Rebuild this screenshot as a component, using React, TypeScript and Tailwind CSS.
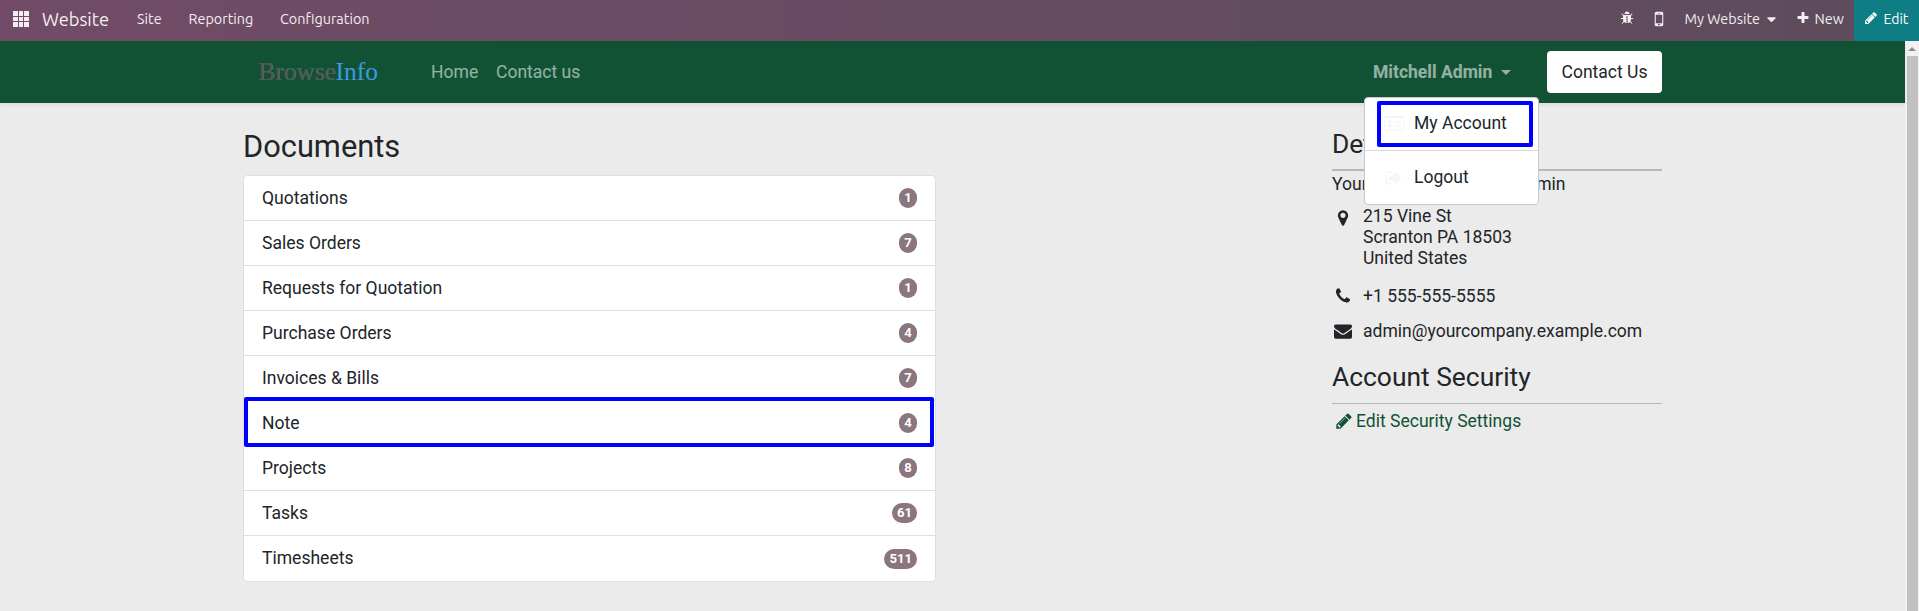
import React from "react";

const PENCIL =
  "M491 1536l91-91-235-235-91 91v107h128v128h107zm523-928q0-22-22-22-10 0-17 7l-542 542q-7 7-7 17 0 22 22 22 10 0 17-7l542-542q7-7 7-17zm-54-192l416 416-832 832h-416v-416zm683 96q0 53-37 90l-166 166-416-416 166-165q36-38 90-38 53 0 91 38l235 234q37 39 37 91z";
const PHONE =
  "M1600 1240q0 27-10 70.5t-21 68.5q-21 50-122 106-94 51-186 51-27 0-53-3.5t-57.5-12.5-47-14.5-55.5-20.5-49-18q-98-35-175-83-127-79-264-216t-216-264q-48-77-83-175-3-9-18-49t-20.5-55.5-14.5-47-12.5-57.5-3.5-53q0-92 51-186 56-101 106-122 25-11 68.5-21t70.5-10q14 0 21 3 18 6 53 76 11 19 30 54t35 63.5 31 53.5q3 4 17.5 25t21.5 35.5 7 28.5q0 20-28.5 50t-62 55-62 53-28.5 46q0 9 5 22.5t8.5 20.5 14 24 11.5 19q76 137 174 235t235 174q2 1 19 11.5t24 14 20.5 8.5 22.5 5q18 0 46-28.5t53-62 55-62 50-28.5q14 0 28.5 7t35.5 21.5 25 17.5q25 15 53.5 31t63.5 35 54 30q70 35 76 53 3 7 3 21z";
const ENVELOPE =
  "M1792 710v794q0 66-47 113t-113 47h-1472q-66 0-113-47t-47-113v-794q44 49 101 87 362 246 497 345 57 42 92.5 65.5t94.5 48 110 24.5h2q51 0 110-24.5t94.5-48 92.5-65.5q170-123 498-345 57-39 100-87zm0-294q0 79-49 151t-122 123q-376 261-468 325-10 7-42.5 31t-54 38.5-52 32.5-57.5 27-50 9h-2q-23 0-50-9t-57.5-27-52-32.5-54-38.5-42.5-31q-91-64-262-182.5t-205-142.5q-62-42-117-115.5t-55-136.5q0-78 41.5-130t118.5-52h1472q65 0 112.5 47t47.5 113z";
const MARKER =
  "M1152 640q0-106-75-181t-181-75-181 75-75 181 75 181 181 75 181-75 75-181zm256 0q0 109-33 179l-364 774q-16 33-47.5 52t-67.5 19-67.5-19-46.5-52l-365-774q-33-70-33-179 0-212 150-362t362-150 362 150 150 362z";
const BUG =
  "M1696 960q0 26-19 45t-45 19h-224q0 171-67 290l208 209q19 19 19 45t-19 45q-18 19-45 19t-45-19l-198-197q-5 5-15 13t-42 28.5-65 36.5-82 29-97 13v-896h-128v896q-51 0-101.5-13.5t-87-33-66-39-43.5-32.5l-15-14-183 207q-20 21-48 21-24 0-43-16-19-18-20.5-44.5t15.5-46.5l202-227q-58-114-58-274h-224q-26 0-45-19t-19-45 19-45 45-19h224v-294l-173-173q-19-19-19-45t19-45 45-19 45 19l173 173h844l173-173q19-19 45-19t45 19 19 45-19 45l-173 173v294h224q26 0 45 19t19 45zm-480-576h-640q0-133 93.5-226.5t226.5-93.5 226.5 93.5 93.5 226.5z";
const MOBILE =
  "M976 1408q0-33-23.5-56.5t-56.5-23.5-56.5 23.5-23.5 56.5 23.5 56.5 56.5 23.5 56.5-23.5 23.5-56.5zm208-160v-704q0-13-9.5-22.5t-22.5-9.5h-512q-13 0-22.5 9.5t-9.5 22.5v704q0 13 9.5 22.5t22.5 9.5h512q13 0 22.5-9.5t9.5-22.5zm-192-848q0-16-16-16h-160q-16 0-16 16t16 16h160q16 0 16-16zm288-16v1024q0 52-38 90t-90 38h-512q-52 0-90-38t-38-90v-1024q0-52 38-90t90-38h512q52 0 90 38t38 90z";
const PLUS =
  "M1600 736v192q0 40-28 68t-68 28h-416v416q0 40-28 68t-68 28h-192q-40 0-68-28t-28-68v-416h-416q-40 0-68-28t-28-68v-192q0-40 28-68t68-28h416v-416q0-40 28-68t68-28h192q40 0 68 28t28 68v416h416q40 0 68 28t28 68z";
const CARET =
  "M1408 704q0 26-19 45l-448 448q-19 19-45 19t-45-19l-448-448q-19-19-19-45t19-45 45-19h896q26 0 45 19t19 45z";
const SIGN_OUT =
  "M704 1440q0 4 1 20t.5 26.5-3 23.5-10 19.5-20.5 6.5h-320q-119 0-203.5-84.5t-84.5-203.5v-704q0-119 84.5-203.5t203.5-84.5h320q13 0 22.5 9.5t9.5 22.5q0 4 1 20t.5 26.5-3 23.5-10 19.5-20.5 6.5h-320q-66 0-113 47t-47 113v704q0 66 47 113t113 47h312l11.5 1 11.5 3 8 5.5 7 9 2 13.5zm928-544q0 26-19 45l-544 544q-19 19-45 19t-45-19-19-45v-288h-448q-26 0-45-19t-19-45v-384q0-26 19-45t45-19h448v-288q0-26 19-45t45-19 45 19l544 544q19 19 19 45z";

function Icon({ d, className }: { d: string; className: string }) {
  return (
    <svg viewBox="0 0 1792 1792" fill="currentColor" className={`block shrink-0 ${className}`}>
      <path d={d} />
    </svg>
  );
}

function AppsIcon() {
  return (
    <svg viewBox="0 0 16 16" fill="currentColor" className="mb-[3px] block size-4 shrink-0">
      {[0, 6, 11].map((y) =>
        [0, 6, 11].map((x) => (
          <rect key={`${x}-${y}`} x={x} y={y} width={x === 6 ? 4 : 5} height={y === 6 ? 4 : 5} />
        )),
      )}
    </svg>
  );
}

function IdCardIcon() {
  return (
    <svg viewBox="0 0 20 15" className="block h-[15px] w-5 shrink-0 text-[#f3f6f5]">
      <rect x="0.5" y="0.5" width="19" height="14" rx="1" fill="none" stroke="currentColor" />
      <path
        fill="currentColor"
        d="M0 0h20v2H0zM3 11c0-2 1-3 3-3s3 1 3 3zM6 4a2 2 0 1 1 0 4a2 2 0 1 1 0-4zM11 5h6v1h-6zM11 7h6v1h-6zM11 10h6v1h-6z"
      />
    </svg>
  );
}

const documents: [string, number][] = [
  ["Quotations", 1],
  ["Sales Orders", 7],
  ["Requests for Quotation", 1],
  ["Purchase Orders", 4],
  ["Invoices & Bills", 7],
  ["Note", 4],
  ["Projects", 8],
  ["Tasks", 61],
  ["Timesheets", 511],
];

function TopBar() {
  return (
    <nav className="flex h-[41px] items-center bg-linear-to-r from-[#714b67] to-[#5d4c5c] pl-[13px] font-['Ubuntu','Noto_Sans',sans-serif] text-[14.4px] leading-[38px] text-[#f1edf0]">
      <AppsIcon />
      <span className="ml-[13px] w-[95px] pb-[3px] text-[18.3px]">Website</span>
      <span className="w-[51.5px] pb-[3px]">Site</span>
      <span className="w-[91.5px] pb-[3px]">Reporting</span>
      <span className="pb-[3px]">Configuration</span>
      <div className="ml-auto flex h-full items-center">
        <Icon d={BUG} className="mr-[15.5px] mb-[5px] size-[14px]" />
        <Icon d={MOBILE} className="mr-[15.5px] mb-[3px] size-[20px]" />
        <span className="w-[76px] pb-[3px] whitespace-nowrap">My Website</span>
        <Icon d={CARET} className="mr-[17px] mb-[3px] ml-[3px] size-[15px]" />
        <Icon d={PLUS} className="mr-[5px] mb-[5px] size-[14px]" />
        <span className="w-[39.5px] pb-[3px]">New</span>
        <div className="flex h-full w-[65px] items-center bg-[#0f7e84] pl-[10px] text-white">
          <Icon d={PENCIL} className="mr-[5.5px] mb-[5px] size-[14px]" />
          <span className="pb-[3px] text-[14px]">Edit</span>
        </div>
      </div>
    </nav>
  );
}

function UserMenu() {
  return (
    <div className="absolute top-[56px] left-[-9px] z-20 flex h-[108px] w-[175px] flex-col rounded-[4px] border border-[#c8c8c8] bg-white text-[#212529]">
      <div className="flex h-[53px] items-center border-b border-[#d9d9d9] pb-[2px] pl-[19px]">
        <IdCardIcon />
        <span className="ml-[10px]">My Account</span>
      </div>
      <div className="flex h-[53px] items-center pl-[19px]">
        <Icon d={SIGN_OUT} className="ml-[1px] size-[18px] text-[#f3f6f5]" />
        <span className="ml-[11px]">Logout</span>
      </div>
      <div className="absolute top-[3px] left-[12px] h-[46px] w-[156px] rounded-[2px] border-4 border-[#0000ff]" />
    </div>
  );
}

function Header() {
  return (
    <header className="relative z-10 flex h-[62px] shrink-0 items-center bg-[#115234] pl-[258px] text-white/55 shadow-[0_2px_4px_rgba(0,0,0,0.075)]">
      <a className="w-[173px] pb-[1px] font-['Liberation_Serif',serif] text-[25.4px] leading-none text-[#555558] [text-shadow:0.5px_-0.5px_0_rgba(170,180,178,0.45)]">
        Browse<span className="text-[#3a9be0] [text-shadow:none]">Info</span>
      </a>
      <a className="w-[65px]">Home</a>
      <a>Contact us</a>
      <div className="relative ml-auto flex h-full w-[174px] items-center font-bold">
        Mitchell Admin
        <span className="ml-[9px] border-x-[5.5px] border-t-[5.5px] border-x-transparent border-t-white/55" />
        <div className="contents font-normal">
          <UserMenu />
        </div>
      </div>
      <button className="mr-[243px] h-[42px] w-[115px] rounded-[4px] bg-white text-[#212529]">Contact Us</button>
    </header>
  );
}

function DocumentList() {
  return (
    <section className="w-[693px]">
      <h3 className="mt-[25px] h-[47px] text-[30.8px] leading-[38px]">Documents</h3>
      <ul className="rounded-[4px] border border-[#dedfe0] bg-white">
        {documents.map(([name, count], i) => (
          <li
            key={name}
            className={`relative flex h-[45px] items-center justify-between pr-[18px] pl-[18px] ${i < documents.length - 1 ? "border-b border-[#dedfe0]" : ""}`}
          >
            <span>{name}</span>
            <span className="flex h-5 min-w-[18px] items-center justify-center rounded-[10px] bg-[#8b757f] px-[5px] text-[13.1px] leading-none font-bold text-white">
              {count}
            </span>
            {name === "Note" && (
              <div className="absolute top-[-4px] left-0 h-[50px] w-[690px] rounded-[2px] border-4 border-[#0000ff]" />
            )}
          </li>
        ))}
      </ul>
    </section>
  );
}

function Details() {
  return (
    <aside className="w-[330px]">
      <h4 className="mt-[25px] h-[41px] text-[26.4px] leading-[33px]">Details</h4>
      <hr className="border-t-2 border-[#b8b8b8]" />
      <p className="h-[35px] leading-[26px]">YourCompany, Mitchell Admin</p>
      <div className="flex leading-[21px]">
        <Icon d={MARKER} className="mt-[3px] mr-[11px] ml-[2px] size-[18px]" />
        <address className="not-italic">
          215 Vine St
          <br />
          Scranton PA 18503
          <br />
          United States
        </address>
      </div>
      <div className="mt-[14px] flex h-[26px] items-center">
        <Icon d={PHONE} className="mr-[11px] ml-[2px] size-[18px]" />
        +1 555-555-5555
      </div>
      <div className="mt-[9px] flex h-[26px] items-center">
        <Icon d={ENVELOPE} className="mr-[11px] ml-[2px] size-[18px]" />
        admin@yourcompany.example.com
      </div>
      <h4 className="mt-[17px] h-[42px] text-[26.4px] leading-[33px]">Account Security</h4>
      <hr className="border-t border-[#b8b8b8]" />
      <a className="mt-[4px] flex h-[26px] items-center text-[#115234]">
        <Icon d={PENCIL} className="mr-[3px] ml-[3px] size-[18px]" />
        Edit Security Settings
      </a>
    </aside>
  );
}

export default function App() {
  return (
    <div className="flex h-[611px] w-[1919px] flex-col overflow-hidden bg-[#ebebeb] font-['Roboto',sans-serif] text-[17.55px] text-[#212529]">
      <TopBar />
      <div className="flex flex-1">
        <div className="flex flex-1 flex-col">
          <Header />
          <main className="flex justify-between pr-[243px] pl-[243px]">
            <DocumentList />
            <Details />
          </main>
        </div>
        <div className="flex w-[14px] flex-col items-center bg-[#f1f1f1]">
          <div className="flex h-[15px] items-center">
            <span className="border-x-4 border-b-4 border-x-transparent border-b-[#8f8f8f]" />
          </div>
          <div className="w-[11px] flex-1 bg-[#c1c1c1]" />
        </div>
      </div>
    </div>
  );
}
